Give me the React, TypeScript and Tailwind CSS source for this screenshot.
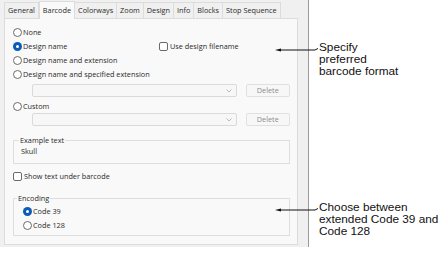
import React from "react";

const tabs = ["General", "Barcode", "Colorways", "Zoom", "Design", "Info", "Blocks", "Stop Sequence"];

function Radio({ checked, label, className = "" }: { checked?: boolean; label: string; className?: string }) {
  return (
    <div className={`flex h-[14px] items-center ${className}`}>
      <span
        className={
          checked
            ? "flex h-[9px] w-[9px] items-center justify-center rounded-full bg-[#0b5cb8]"
            : "h-[9px] w-[9px] rounded-full border border-[#6a6a6a] bg-white"
        }>
        {checked && <span className="h-[3px] w-[3px] rounded-full bg-white" />}
      </span>
      <span className="ml-[1px]">{label}</span>
    </div>
  );
}

function Check({ label, className = "" }: { label: string; className?: string }) {
  return (
    <div className={`flex h-[14px] items-center ${className}`}>
      <span className="h-[9px] w-[9px] rounded-[2px] border border-[#6a6a6a] bg-white" />
      <span className="ml-[2px]">{label}</span>
    </div>
  );
}

function ComboRow() {
  return (
    <div className="flex h-[13px] items-center pl-[19px]">
      <div className="flex h-[13px] w-[212px] items-center justify-end rounded-[2px] border border-[#dadada] bg-[#f7f7f7] pr-[4px]">
        <svg width="6" height="4" viewBox="0 0 6 4">
          <path d="M0.5 0.5 L3 3 L5.5 0.5" fill="none" stroke="#a8a8a8" strokeWidth="0.8" />
        </svg>
      </div>
      <div className="ml-[9px] flex h-[13px] w-[46px] items-center justify-center rounded-[2px] border border-[#e0e0e0] bg-[#f7f7f7] text-[#8c8c8c]">
        Delete
      </div>
    </div>
  );
}

function Callout({ top, lines }: { top: number; lines: string[] }) {
  return (
    <div className="absolute left-[275px] flex items-start" style={{ top }}>
      <svg width="44" height="10" viewBox="0 0 44 10" className="mt-[6px]">
        <path d="M0 3 L6 1.5 L6 4.5 Z" fill="#111" />
        <path d="M4 3 H40 L43 1.5" fill="none" stroke="#111" strokeWidth="1" />
      </svg>
      <div className="text-[11.8px] leading-[12px] text-[#111] [font-family:'Liberation_Sans',Arial,sans-serif]">
        {lines.map((l) => (
          <div key={l} className="whitespace-nowrap">
            {l}
          </div>
        ))}
      </div>
    </div>
  );
}

export default function App() {
  return (
    <div className="relative flex h-[260px] w-[448px] items-start bg-white text-[7.3px] text-[#2a2a2a] [font-family:'Open_Sans','Noto_Sans',sans-serif]">
      <div className="flex h-[247px] w-[309px] flex-col border-r border-[#9a9a9a] bg-[#f0f0f0] pl-[4px] pr-[10px]">
        <div className="flex h-[18px] items-end">
          {tabs.map((t) => (
            <div
              key={t}
              className={
                t === "Barcode"
                  ? "relative z-10 -mb-[1px] flex h-[18px] items-center border-x border-t border-[#dcdcdc] bg-[#f9f9f9] px-[3px]"
                  : "flex h-[16px] items-center border-t border-r border-[#dcdcdc] px-[3px] first:border-l"
              }>
              {t}
            </div>
          ))}
        </div>
        <div className="flex h-[227px] flex-col border border-[#dcdcdc] bg-[#f9f9f9] pl-[8px] pr-[7px] pt-[6px]">
          <Radio label="None" />
          <div className="flex">
            <Radio checked label="Design name" className="w-[146px]" />
            <Check label="Use design filename" />
          </div>
          <Radio label="Design name and extension" />
          <Radio label="Design name and specified extension" />
          <div className="mt-[3px]">
            <ComboRow />
          </div>
          <Radio label="Custom" className="mt-[2px]" />
          <div>
            <ComboRow />
          </div>
          <fieldset className="mt-[10px] h-[28px] border border-[#dedede] px-[6px]">
            <legend className="-ml-[1px] px-[1px] leading-[8px]">Example text</legend>
            <div className="pl-[1px] pt-[2px]">Skull</div>
          </fieldset>
          <Check label="Show text under barcode" className="mt-[5px]" />
          <fieldset className="mt-[11px] h-[42px] border border-[#dedede] pl-[9px]">
            <legend className="-ml-[6px] px-[1px] leading-[8px]">Encoding</legend>
            <Radio checked label="Code 39" className="mt-[2px] h-[12px]" />
            <Radio label="Code 128" className="h-[13px]" />
          </fieldset>
        </div>
      </div>
      <Callout top={41} lines={["Specify", "preferred", "barcode format"]} />
      <Callout top={201} lines={["Choose between", "extended Code 39 and", "Code 128"]} />
    </div>
  );
}
